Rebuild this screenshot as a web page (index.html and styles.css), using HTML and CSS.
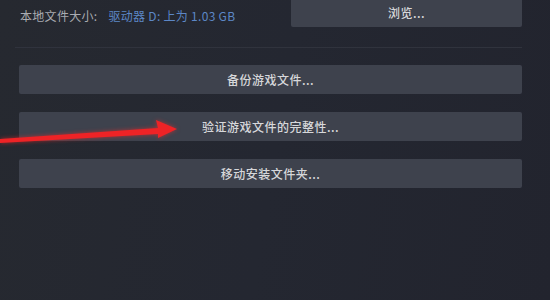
FILE: index.html
```html
<!DOCTYPE html>
<html lang="zh-CN">

<head>
    <meta charset="UTF-8">
    <meta name="viewport" content="width=device-width, initial-scale=1.0">
    <title>本地文件</title>
    <link rel="stylesheet" href="styles.css">
</head>

<body>
    <div class="panel">
        <div class="top">
            <div class="size">本地文件大小: <span class="drive">驱动器 D: 上为 1.03 GB</span></div>
            <div class="btn browse">浏览...</div>
        </div>

        <div class="divider"></div>

        <ul class="actions">
            <li class="btn">备份游戏文件...</li>
            <li class="btn">验证游戏文件的完整性...</li>
            <li class="btn">移动安装文件夹...</li>
        </ul>

        <!-- red arrow pointing at the verify button -->
        <svg class="arrow" width="190" height="40" viewBox="0 0 190 40">
            <polygon points="0,32 158,21 156,13 177,22 158,31 158,27 0,36" fill="#ee2326" />
        </svg>
    </div>
</body>

</html>
```

FILE: styles.css
```css
body {
    margin: 0;
    padding: 0;
    height: 300px;
    overflow: hidden;
    background-color: #232630;
    font-family: "Noto Sans CJK SC", "Noto Sans", sans-serif;
    font-size: 12px;
}

.panel {
    position: relative;
    height: 300px;
    background: linear-gradient(100deg, #262930 0%, #242731 50%, #22242e 100%);
}

.top {
    display: flex;
    justify-content: space-between;
    align-items: flex-start;
    height: 28px;
    padding: 0 28px 0 20px;
}

.size {
    color: #a9abb0;
    padding-top: 7px;
    letter-spacing: 0.3px;
}

.drive {
    color: #5c87c6;
    margin-left: 8px;
}

.btn {
    background-color: #3e424d;
    color: #d6d7da;
    border-radius: 2px;
    text-align: center;
    line-height: 29px;
    height: 29px;
    letter-spacing: 0.5px;
    font-weight: 500;
}

.browse {
    width: 231px;
    height: 27px;
    line-height: 25px;
    border-radius: 0 0 2px 2px;
}

.divider {
    height: 1px;
    margin: 19px 28px 0 15px;
    background-color: #30333d;
}

.actions {
    list-style: none;
    margin: 17px 28px 0 19px;
    padding: 0;
    display: flex;
    flex-direction: column;
    gap: 18px;
}

.arrow {
    position: absolute;
    left: 0;
    top: 107px;
    filter: drop-shadow(0 0 2px rgba(255, 40, 40, 0.6));
}
```
